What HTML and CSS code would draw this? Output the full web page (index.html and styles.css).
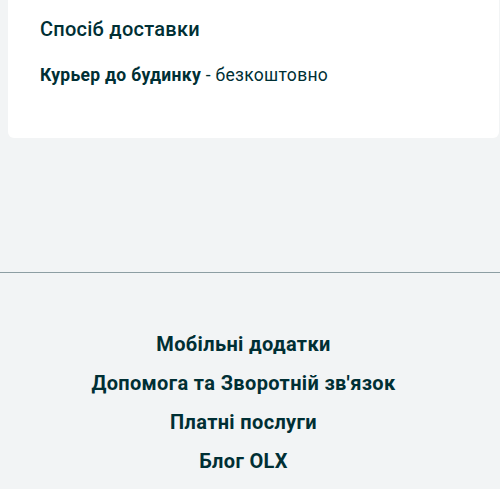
FILE: index.html
```html
<!DOCTYPE html>
<html lang="uk">
<head>
<meta charset="utf-8">
<link rel="stylesheet" href="styles.css">
</head>
<body>
<section class="card">
  <h2 class="card-title">Спосіб доставки</h2>
  <p class="delivery"><strong>Курьер до будинку</strong> - безкоштовно</p>
</section>
<footer class="footer">
  <nav class="links">
    <a href="#">Мобільні додатки</a>
    <a href="#">Допомога та Зворотній зв'язок</a>
    <a href="#">Платні послуги</a>
    <a href="#">Блог OLX</a>
  </nav>
</footer>
</body>
</html>
```

FILE: styles.css
```css
html, body {
  margin: 0;
  padding: 0;
  background: #f2f4f5;
  font-family: Roboto, "Noto Sans", sans-serif;
  color: #002f34;
}
.card {
  background: #fff;
  margin: 0 1px 0 8px;
  border-radius: 0 0 6px 6px;
  height: 138px;
  padding: 17px 32px 0;
  box-sizing: border-box;
}
.card-title {
  margin: 0;
  font-size: 20px;
  font-weight: 500;
  line-height: 24px;
  letter-spacing: 0.25px;
}
.delivery {
  margin: 24px 0 0;
  font-size: 17.5px;
  line-height: 20px;
  letter-spacing: 0.3px;
}
.delivery strong {
  font-weight: 700;
}
.footer {
  margin-top: 134px;
  border-top: 1px solid #8d9ea3;
  padding-top: 59px;
}
.links {
  display: flex;
  flex-direction: column;
  align-items: center;
  gap: 15px;
  padding-right: 13px;
}
.links a {
  color: #002f34;
  text-decoration: none;
  font-size: 20px;
  font-weight: 700;
  line-height: 24px;
  letter-spacing: 0.35px;
}
```
